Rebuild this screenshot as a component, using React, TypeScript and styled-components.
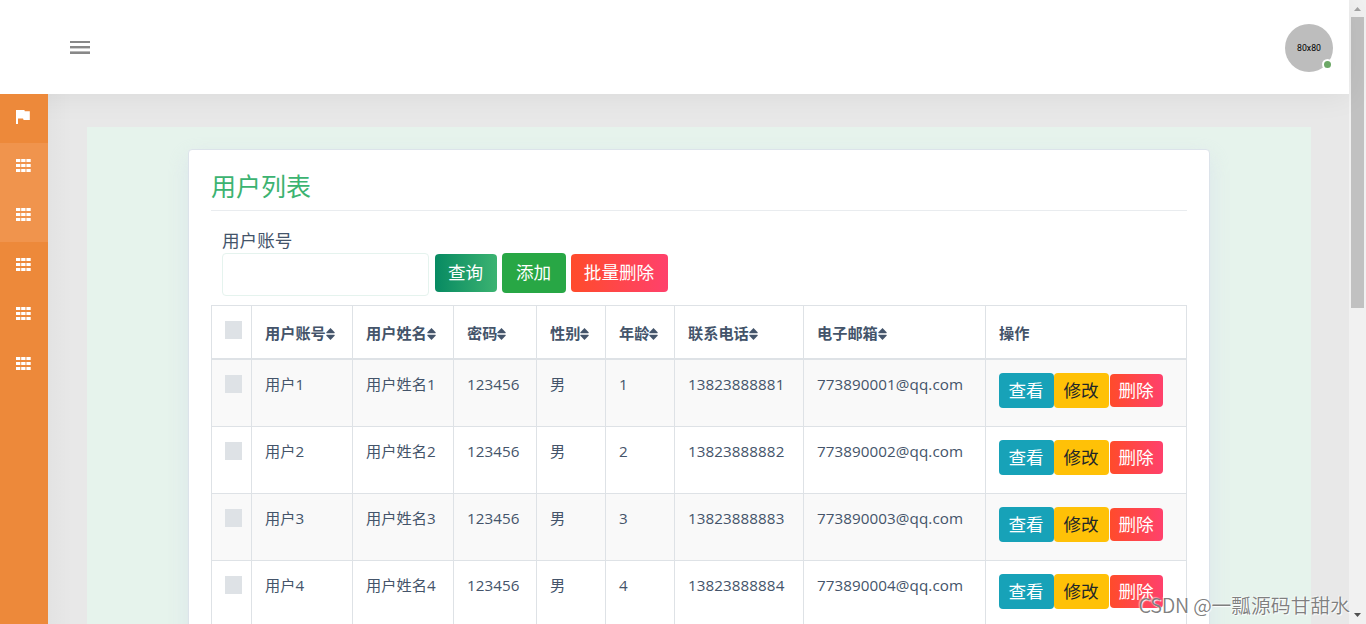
import React from "react";
import styled, { createGlobalStyle, css } from "styled-components";

const GlobalStyle = createGlobalStyle`
  * { box-sizing: border-box; }
  body {
    margin: 0;
    overflow: hidden;
    font-family: "Open Sans", "Noto Sans CJK SC", sans-serif;
    font-weight: 400;
    font-size: 15.2px;
    color: #44546a;
  }
`;

const Window = styled.div`
  position: relative;
  display: flex;
  height: 624px;
  overflow: hidden;
  background: #e8e8e8;
`;

const Page = styled.div`
  flex: 1;
  display: flex;
  flex-direction: column;
  min-width: 0;
`;

const TopBar = styled.header`
  position: relative;
  z-index: 2;
  flex: none;
  display: flex;
  align-items: center;
  justify-content: space-between;
  height: 94px;
  padding: 2px 16px 0 70px;
  background: #fff;
  box-shadow: 0 0 30px rgba(0, 0, 0, 0.07);
`;

const MenuIcon = styled.svg`
  display: block;
  width: 20px;
  height: 14px;
  fill: #888;
`;

const Avatar = styled.div`
  position: relative;
  display: flex;
  align-items: center;
  justify-content: center;
  width: 48px;
  height: 48px;
  border-radius: 50%;
  background: #bdbdbd;
  color: #000;
  font: 400 8.7px/1 Roboto, sans-serif;
`;

const OnlineDot = styled.span`
  position: absolute;
  right: 0;
  bottom: 2px;
  width: 11px;
  height: 11px;
  border: 2px solid #fff;
  border-radius: 50%;
  background: #6ca866;
`;

const Body = styled.div`
  flex: 1;
  display: flex;
  min-height: 0;
`;

const Sidebar = styled.nav`
  position: relative;
  z-index: 3;
  flex: none;
  display: flex;
  flex-direction: column;
  width: 48px;
  background: #ed893a;
`;

const SideItem = styled.a<{ $light?: boolean; $h: number }>`
  display: flex;
  flex: none;
  height: ${(p) => p.$h}px;
  padding: 16px 0 0 16px;
  background: ${(p) => (p.$light ? "#f0944d" : "transparent")};
  svg { display: block; fill: #fff; }
`;

const Content = styled.main`
  flex: 1;
  padding: 33px 38px 0 39px;
  overflow: hidden;
  background: linear-gradient(to right, rgba(0, 0, 0, 0.025), transparent 24px);
`;

const Panel = styled.section`
  height: 700px;
  padding: 22px 101px 0;
  background: #e6f3ec;
`;

const Card = styled.div`
  height: 660px;
  padding: 21px 22px 0;
  border: 1px solid #dce3ea;
  border-radius: 4px;
  background: #fff;
  box-shadow: 0 8px 20px rgba(205, 215, 235, 0.45);
`;

const Title = styled.h3`
  height: 40px;
  margin: 0;
  border-bottom: 1px solid #e9ecef;
  color: #3cb371;
  font-size: 25px;
  font-weight: 400;
  line-height: 30px;
`;

const Search = styled.form`
  height: 94px;
  padding: 18px 0 0 11px;
  font-size: 17.6px;
`;

const Label = styled.label`
  display: block;
  height: 24px;
  line-height: 22px;
`;

const Controls = styled.div`
  display: flex;
  align-items: flex-start;
`;

const Field = styled.input`
  width: 207px;
  height: 43px;
  margin-right: 6px;
  border: 1px solid #e5f3ee;
  border-radius: 4px;
  outline: 0;
  background: #fff;
`;

const tones = {
  query: css`background: linear-gradient(to right, #078a62, #3cb371); color: #fff;`,
  add: css`background: #28a745; color: #fff;`,
  danger: css`background: linear-gradient(to right, #ff4b2b, #ff416c); color: #fff;`,
  info: css`background: #17a2b8; color: #fff;`,
  warning: css`background: #ffc107; color: #212529;`,
};

const Button = styled.button<{ $tone: keyof typeof tones; $w: number; $h: number; $top?: number; $gap?: number }>`
  flex: none;
  width: ${(p) => p.$w}px;
  height: ${(p) => p.$h}px;
  margin: ${(p) => p.$top ?? 0}px ${(p) => p.$gap ?? 0}px 0 0;
  padding: 0 1px 2px 0;
  border: 0;
  border-radius: 4px;
  font: 400 17.6px/24px "Open Sans", "Noto Sans CJK SC", sans-serif;
  ${(p) => tones[p.$tone]}
`;

const Table = styled.table`
  width: 976px;
  table-layout: fixed;
  border-collapse: separate;
  border-spacing: 0;
  border: solid #dee2e6;
  border-width: 1px 0 0 1px;
`;

const HeadCell = styled.th`
  height: 54px;
  padding: 15px 0 0 13px;
  border: solid #dee2e6;
  border-width: 0 1px 2px 0;
  text-align: left;
  vertical-align: top;
  font-weight: 600;
  line-height: 24px;
  white-space: nowrap;
`;

const Row = styled.tr`
  &:nth-child(odd) { background: #f9f9f9; }
`;

const Cell = styled.td`
  height: 67px;
  padding: 13px 0 0 13px;
  border: solid #dee2e6;
  border-width: 0 1px 1px 0;
  vertical-align: top;
  line-height: 22px;
  letter-spacing: 0.08px;
  white-space: nowrap;
`;

const Check = styled.span<{ $top: number }>`
  display: block;
  width: 17px;
  height: 18px;
  margin-top: ${(p) => p.$top}px;
  background: #dee2e6;
`;

const SortGlyph = styled.svg`
  display: inline-block;
  width: 9px;
  height: 12px;
  vertical-align: -1px;
  fill: #44546a;
`;

const Actions = styled.div`
  display: flex;
`;

const ScrollTrack = styled.div`
  flex: none;
  display: flex;
  flex-direction: column;
  justify-content: space-between;
  align-items: center;
  width: 17px;
  background: #f1f1f1;
`;

const ScrollThumb = styled.div`
  width: 13px;
  height: 291px;
  margin-left: 2px;
  background: #c1c1c1;
`;

const ScrollArrow = styled.svg`
  display: block;
  width: 17px;
  height: 17px;
`;

const Watermark = styled.div`
  position: absolute;
  z-index: 3;
  right: 16px;
  bottom: 5px;
  color: rgba(120, 120, 120, 0.95);
  font: 350 19.8px/28px "Noto Sans CJK SC", sans-serif;
  text-shadow: 1px 1px 1px #fff, -1px -1px 1px rgba(255, 255, 255, 0.5);
  white-space: nowrap;
`;

const Latin = styled.span`
  letter-spacing: -0.2px;
`;

const columns = [
  { label: "用户账号", width: 101, sort: true },
  { label: "用户姓名", width: 101, sort: true },
  { label: "密码", width: 83, sort: true },
  { label: "性别", width: 69, sort: true },
  { label: "年龄", width: 69, sort: true },
  { label: "联系电话", width: 129, sort: true },
  { label: "电子邮箱", width: 182, sort: true },
  { label: "操作", width: 201, sort: false },
];

const users = [1, 2, 3, 4].map((n) => [
  `用户${n}`, `用户姓名${n}`, "123456", "男", `${n}`, `1382388888${n}`, `77389000${n}@qq.com`,
]);

const menu = [
  { h: 49, light: false },
  { h: 49, light: true },
  { h: 50, light: true },
  { h: 49, light: false },
  { h: 50, light: false },
  { h: 49, light: false },
];

const Flag = () => (
  <svg width="15" height="15" viewBox="0 0 15 15">
    <path d="M0 0H8.4L8.8 1.2H13.8V10H7.6L7 8.4H2V14H0Z" />
  </svg>
);

const GridGlyph = () => (
  <svg width="15" height="13" viewBox="0 0 15 13">
    {[0, 5, 10].map((y) =>
      [0, 5.2, 10.4].map((x) => <rect key={`${x}-${y}`} x={x} y={y} width="4.3" height="3" />)
    )}
  </svg>
);

const Sort = () => (
  <SortGlyph viewBox="0 0 9 12">
    <path d="M4.5 0L8.6 4.2Q9 5.2 8.2 5.2H.8Q0 5.2 .4 4.2Z" />
    <path d="M4.5 12L8.6 7.8Q9 6.8 8.2 6.8H.8Q0 6.8 .4 7.8Z" />
  </SortGlyph>
);

export default function App() {
  return (
    <>
      <GlobalStyle />
      <Window>
        <Page>
          <TopBar>
            <MenuIcon viewBox="0 0 20 14">
              <rect y="0" width="20" height="2" />
              <rect y="5" width="20" height="2.4" />
              <rect y="10.4" width="20" height="2.6" />
            </MenuIcon>
            <Avatar>
              80x80
              <OnlineDot />
            </Avatar>
          </TopBar>
          <Body>
            <Sidebar>
              {menu.map((m, i) => (
                <SideItem key={i} $h={m.h} $light={m.light}>
                  {i === 0 ? <Flag /> : <GridGlyph />}
                </SideItem>
              ))}
            </Sidebar>
            <Content>
              <Panel>
                <Card>
                  <Title>用户列表</Title>
                  <Search>
                    <Label>用户账号</Label>
                    <Controls>
                      <Field />
                      <Button type="button" $tone="query" $w={62} $h={38} $top={1} $gap={5}>查询</Button>
                      <Button type="button" $tone="add" $w={64} $h={40} $gap={5}>添加</Button>
                      <Button type="button" $tone="danger" $w={97} $h={38} $top={1}>批量删除</Button>
                    </Controls>
                  </Search>
                  <Table>
                    <colgroup>
                      <col style={{ width: 40 }} />
                      {columns.map((c) => (
                        <col key={c.label} style={{ width: c.width }} />
                      ))}
                    </colgroup>
                    <thead>
                      <tr>
                        <HeadCell><Check $top={0} /></HeadCell>
                        {columns.map((c) => (
                          <HeadCell key={c.label}>
                            {c.label}
                            {c.sort && <Sort />}
                          </HeadCell>
                        ))}
                      </tr>
                    </thead>
                    <tbody>
                      {users.map((u) => (
                        <Row key={u[0]}>
                          <Cell><Check $top={2} /></Cell>
                          {u.map((v, i) => (
                            <Cell key={i}>{v}</Cell>
                          ))}
                          <Cell>
                            <Actions>
                              <Button $tone="info" $w={55} $h={35}>查看</Button>
                              <Button $tone="warning" $w={55} $h={35} $gap={1}>修改</Button>
                              <Button $tone="danger" $w={53} $h={33} $top={1}>删除</Button>
                            </Actions>
                          </Cell>
                        </Row>
                      ))}
                    </tbody>
                  </Table>
                </Card>
              </Panel>
            </Content>
          </Body>
        </Page>
        <ScrollTrack>
          <div>
            <ScrollArrow viewBox="0 0 17 17"><path d="M5 11L8.5 7L12 11Z" fill="#a3a3a3" /></ScrollArrow>
            <ScrollThumb />
          </div>
          <ScrollArrow viewBox="0 0 17 17"><path d="M5 6L8.5 10L12 6Z" fill="#505050" /></ScrollArrow>
        </ScrollTrack>
        <Watermark><Latin>CSDN @</Latin>一瓢源码甘甜水</Watermark>
      </Window>
    </>
  );
}
